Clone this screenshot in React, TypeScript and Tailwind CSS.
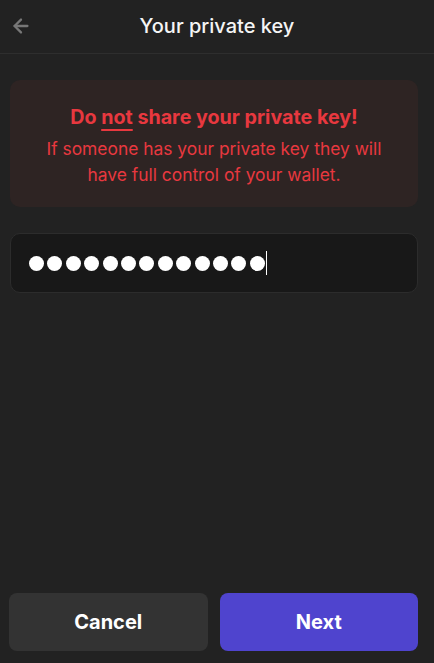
import { ArrowLeft } from "lucide-react";

export default function App() {
  const dots = Array.from({ length: 13 });

  return (
    <div
      className="flex h-[663px] w-[434px] flex-col bg-[#222222] text-white"
      style={{ fontFamily: "Inter, 'Noto Sans', sans-serif" }}
    >
      {/* header */}
      <div className="relative flex h-[54px] shrink-0 items-center justify-center border-b border-[#2e2e2e]">
        <button className="absolute left-[10px] top-[15px] text-[#777777]">
          <ArrowLeft size={22} strokeWidth={2.5} />
        </button>
        <h1 className="-mt-[1px] text-[20px] font-medium text-[#f5f5f5]">Your private key</h1>
      </div>

      <div className="flex flex-1 flex-col pl-[10px] pr-[16px] pt-[26px] pb-[12px]">
        {/* warning */}
        <div className="flex h-[127px] flex-col items-center justify-center rounded-[10px] bg-[#2e2423] px-2 pt-[5px] text-center text-[#e8383f]">
          <p className="text-[19.7px] font-bold leading-[26px]">
            Do <span className="underline decoration-2 underline-offset-[5px]">not</span> share your private key!
          </p>
          <p className="mt-[6px] text-[17.4px] leading-[26px]">
            If someone has your private key they will
            <br />
            have full control of your wallet.
          </p>
        </div>

        {/* key field */}
        <div className="mt-[26px] flex h-[60px] items-center rounded-[10px] border border-[#2c2c2c] bg-[#181818] pl-[18px]">
          <div className="flex items-center gap-[3.4px]">
            {dots.map((_, i) => (
              <div key={i} className="h-[15px] w-[15px] rounded-full bg-white" />
            ))}
          </div>
          <div className="ml-[1px] h-[24px] w-[1px] bg-white" />
        </div>

        <div className="flex-1" />

        {/* actions */}
        <div className="flex gap-[12px]">
          <button className="-ml-[1px] h-[58px] flex-1 rounded-[8px] bg-[#333333] text-[20px] font-bold text-white">
            Cancel
          </button>
          <button className="h-[58px] flex-1 rounded-[8px] bg-[#4f44ce] text-[20px] font-bold text-white">
            Next
          </button>
        </div>
      </div>
    </div>
  );
}
